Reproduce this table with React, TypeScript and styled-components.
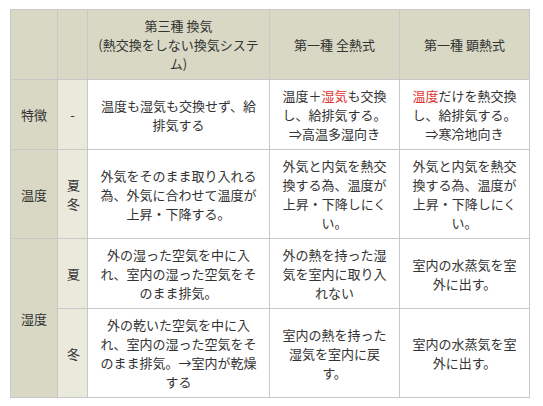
import styled, { createGlobalStyle } from 'styled-components';

const GlobalStyle = createGlobalStyle`
  html, body {
    margin: 0;
    padding: 0;
    background: #fff;
  }
  body {
    padding: 9px 0 0 10px;
    font-family: "Noto Sans CJK JP", "Noto Sans", sans-serif;
    color: #333;
  }
`;

const Table = styled.table`
  border-collapse: collapse;
  table-layout: fixed;
  width: 520px;
  font-size: 13px;
  line-height: 19px;
`;

const Cell = styled.td<{ $tone?: 'head' | 'sub' | 'body' }>`
  border: 1px solid #c8c8c8;
  padding: 6px 9px;
  text-align: center;
  vertical-align: middle;
  word-break: normal;
  line-break: strict;
  background: ${({ $tone }) =>
    $tone === 'head' ? '#d8d8c4' : $tone === 'sub' ? '#eaeadc' : '#fff'};
`;

const Red = styled.span`
  color: #e0352f;
`;

export default function App() {
  return (
    <>
      <GlobalStyle />
      <Table>
        <colgroup>
          <col style={{ width: 47 }} />
          <col style={{ width: 30 }} />
          <col style={{ width: 182 }} />
          <col style={{ width: 130 }} />
          <col style={{ width: 130 }} />
        </colgroup>
        <tbody>
          <tr>
            <Cell $tone="head" />
            <Cell $tone="head" />
            <Cell $tone="head">
              第三種 換気
              <br />
              (熱交換をしない換気システム)
            </Cell>
            <Cell $tone="head">第一種 全熱式</Cell>
            <Cell $tone="head">第一種 顕熱式</Cell>
          </tr>
          <tr>
            <Cell $tone="head">特徴</Cell>
            <Cell $tone="sub">-</Cell>
            <Cell>温度も湿気も交換せず、給排気する</Cell>
            <Cell>
              温度＋<Red>湿気</Red>も交換し、給排気する。
              <br />
              ⇒高温多湿向き
            </Cell>
            <Cell>
              <Red>温度</Red>だけを熱交換し、給排気する。
              <br />
              ⇒寒冷地向き
            </Cell>
          </tr>
          <tr>
            <Cell $tone="head">温度</Cell>
            <Cell $tone="sub">夏冬</Cell>
            <Cell>外気をそのまま取り入れる為、外気に合わせて温度が上昇・下降する。</Cell>
            <Cell>外気と内気を熱交換する為、温度が上昇・下降しにくい。</Cell>
            <Cell>外気と内気を熱交換する為、温度が上昇・下降しにくい。</Cell>
          </tr>
          <tr>
            <Cell $tone="head" rowSpan={2}>
              湿度
            </Cell>
            <Cell $tone="sub">夏</Cell>
            <Cell>外の湿った空気を中に入れ、室内の湿った空気をそのまま排気。</Cell>
            <Cell>外の熱を持った湿気を室内に取り入れない</Cell>
            <Cell>室内の水蒸気を室外に出す。</Cell>
          </tr>
          <tr>
            <Cell $tone="sub">冬</Cell>
            <Cell>外の乾いた空気を中に入れ、室内の湿った空気をそのまま排気。→室内が乾燥する</Cell>
            <Cell>室内の熱を持った湿気を室内に戻す。</Cell>
            <Cell>室内の水蒸気を室外に出す。</Cell>
          </tr>
        </tbody>
      </Table>
    </>
  );
}
